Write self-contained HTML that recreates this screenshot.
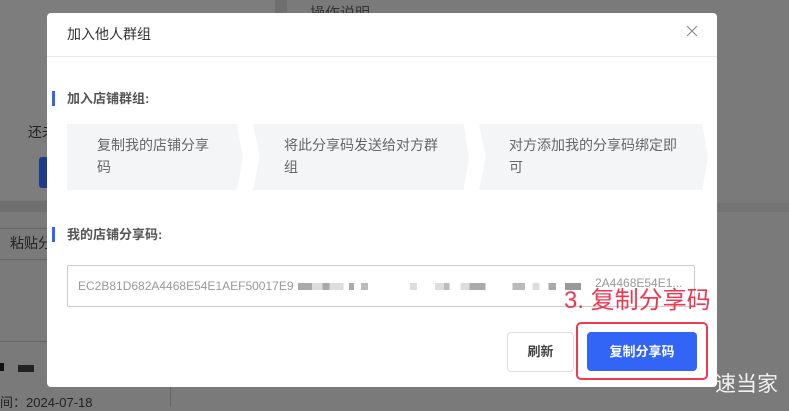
<!DOCTYPE html>
<html><head><meta charset="utf-8"><style>
*{margin:0;padding:0;box-sizing:border-box}
body{width:789px;height:407px;overflow:hidden;background:#7a7a7a;font-family:"Liberation Sans","Noto Sans CJK SC",sans-serif;position:relative}
.a{position:absolute}
.step{position:absolute;top:124px;height:66px;background:#f4f5f7;font-size:14px;color:#666;line-height:22px}
</style></head><body>
<div class="a" style="left:0;top:0;width:275px;height:200px;background:#7d7d7d"></div>
<div class="a" style="left:275px;top:0;width:12px;height:40px;background:#6f6f6f"></div>
<div class="a" style="left:310px;top:2px;font-size:15px;color:#333">操作说明</div>
<div class="a" style="left:28px;top:122px;font-size:14px;color:#222">还未</div>
<div class="a" style="left:39px;top:157px;width:10px;height:31px;background:#1e3a8e;border-radius:3px"></div>
<div class="a" style="left:0;top:201px;width:47px;height:11px;background:#6f6f6f"></div>
<div class="a" style="left:0;top:228px;width:47px;height:1px;background:#666"></div>
<div class="a" style="left:10px;top:233px;font-size:14px;color:#222">粘贴分</div>
<div class="a" style="left:0;top:259px;width:47px;height:1px;background:#666"></div>
<div class="a" style="left:0;top:341px;width:47px;height:1px;background:#666"></div>
<div class="a" style="left:0;top:363px;width:4px;height:8px;background:#111"></div>
<div class="a" style="left:18px;top:365px;width:16px;height:7px;background:#222"></div>
<div class="a" style="left:0;top:392px;font-size:13px;color:#222">间：2024-07-18</div>
<div class="a" style="left:170px;top:386px;width:1px;height:21px;background:#666"></div>
<div class="a" style="left:716px;top:203px;width:73px;height:9px;background:#747474"></div>

<div class="a" style="left:47px;top:13px;width:670px;height:374px;background:#fff;border-radius:4px"></div>
<div class="a" style="left:67px;top:24px;font-size:14px;color:#333;line-height:20px">加入他人群组</div>
<svg class="a" style="left:686px;top:25px" width="12" height="12" viewBox="0 0 12 12"><path d="M1 1L11 11M11 1L1 11" stroke="#888" stroke-width="1.1"/></svg>
<div class="a" style="left:47px;top:56px;width:670px;height:1px;background:#e8e8e8"></div>

<div class="a" style="left:52px;top:91px;width:3px;height:15px;background:#3363f5"></div>
<div class="a" style="left:67px;top:89px;font-size:13px;font-weight:bold;color:#555;line-height:20px">加入店铺群组:</div>

<div class="step" style="left:67px;width:176px;clip-path:polygon(0 0,96.5% 0,100% 50%,96.5% 100%,0 100%)"><div style="margin:10px 0 0 30px;width:118px">复制我的店铺分享码</div></div>
<div class="step" style="left:253px;width:216px;clip-path:polygon(0 0,97.5% 0,100% 50%,97.5% 100%,0 100%,3% 50%)"><div style="margin:10px 0 0 31px;width:160px">将此分享码发送给对方群组</div></div>
<div class="step" style="left:479px;width:229px;clip-path:polygon(0 0,97.5% 0,100% 50%,97.5% 100%,0 100%,3% 50%)"><div style="margin:10px 0 0 30px;width:175px">对方添加我的分享码绑定即可</div></div>

<div class="a" style="left:52px;top:227px;width:3px;height:15px;background:#3363f5"></div>
<div class="a" style="left:67px;top:225px;font-size:13px;font-weight:bold;color:#555;line-height:20px">我的店铺分享码:</div>

<div class="a" style="left:67px;top:265px;width:628px;height:42px;border:1px solid #ccc;border-radius:2px;font-size:12px;color:#999;line-height:40px;padding-left:10px">EC2B81D682A4468E54E1AEF50017E9</div>
<div class="a" style="left:298px;top:283px;width:70px;height:7px;background:linear-gradient(90deg,#aaa 0 20%,#ddd 20% 35%,#aaa 35% 45%,#ddd 45% 65%,#fff 65% 73%,#aaa 73% 80%,#fff 80% 90%,#bbb 90%)"></div>
<div class="a" style="left:410px;top:283px;width:180px;height:7px;background:linear-gradient(90deg,#ddd 0 4%,#fff 4% 14%,#ddd 14% 19%,#bbb 19% 22%,#fff 22% 28%,#ddd 28% 33%,#aaa 33% 42%,#fff 42% 57%,#bbb 57% 64%,#fff 64% 68%,#ddd 68% 72%,#fff 72% 77%,#aaa 77% 81%,#fff 81% 86%,#999 86% 95%,#fff 95%)"></div>
<div class="a" style="left:595px;top:276px;font-size:12px;color:#999">2A4468E54E1...</div>

<div class="a" style="left:564px;top:285px;font-size:24px;color:#f0364f;line-height:32px;white-space:nowrap">3. 复制分享码</div>
<div class="a" style="left:507px;top:332px;width:67px;height:40px;border:1px solid #ddd;border-radius:4px;font-size:13px;font-weight:bold;color:#444;text-align:center;line-height:38px">刷新</div>
<div class="a" style="left:576px;top:322px;width:132px;height:58px;border:2px solid #ef3a52;border-radius:5px"></div>
<div class="a" style="left:587px;top:332px;width:110px;height:39px;background:#3264f6;border-radius:4px;font-size:13px;font-weight:bold;color:#fff;text-align:center;line-height:39px">复制分享码</div>
<div class="a" style="left:715px;top:371px;font-size:21px;color:#f2f2f2;line-height:28px">速当家</div>
</body></html>
